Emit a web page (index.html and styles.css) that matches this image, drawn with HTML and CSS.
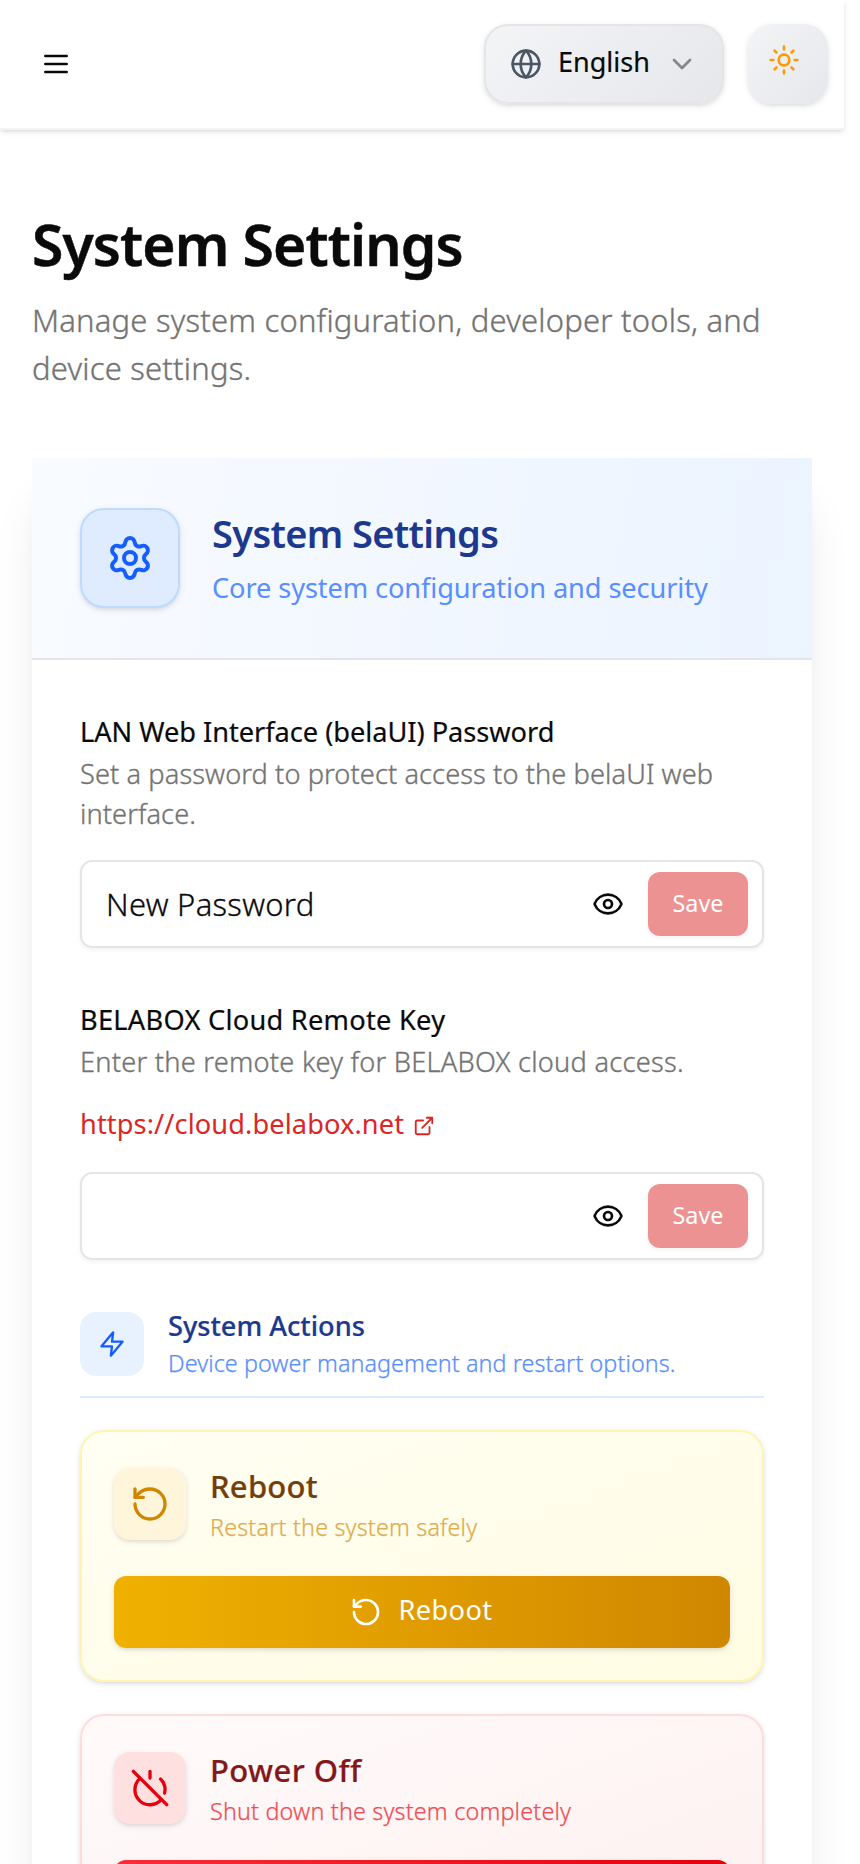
FILE: index.html
```
<!DOCTYPE html>
<html lang="en">
<head>
<meta charset="utf-8">
<title>System Settings</title>
<link rel="stylesheet" href="styles.css">
</head>
<body>
<header class="topbar">
  <button class="menu" aria-label="Menu"><svg class="icon i32" viewBox="0 0 24 24"><path d="M4 6h16M4 12h16M4 18h16"/></svg></button>
  <div class="tools">
    <button class="tool language">
      <svg class="icon i32 globe" viewBox="0 0 24 24"><circle cx="12" cy="12" r="10"/><path d="M12 2a14.5 14.5 0 0 0 0 20 14.5 14.5 0 0 0 0-20M2 12h20"/></svg>
      <span class="language-name">English</span>
      <svg class="icon i32 chevron" viewBox="0 0 24 24"><path d="m6 9 6 6 6-6"/></svg>
    </button>
    <button class="tool theme" aria-label="Theme"><svg class="icon i32 sun" viewBox="0 0 24 24"><circle cx="12" cy="12" r="4"/><path d="M12 2v2M12 20v2M4.93 4.93l1.41 1.41M17.66 17.66l1.41 1.41M2 12h2M20 12h2M6.34 17.66l-1.41 1.41M19.07 4.93l-1.41 1.41"/></svg></button>
  </div>
</header>
<main class="content">
  <h1 class="page-title">System Settings</h1>
  <p class="page-lead">Manage system configuration, developer tools, and<br>device settings.</p>
  <section class="card">
    <div class="card-head">
      <span class="card-icon"><svg class="icon i48" viewBox="0 0 24 24"><path d="M9.671 4.136a2.34 2.34 0 0 1 4.659 0 2.34 2.34 0 0 0 3.319 1.915 2.34 2.34 0 0 1 2.33 4.033 2.34 2.34 0 0 0 0 3.831 2.34 2.34 0 0 1-2.33 4.033 2.34 2.34 0 0 0-3.319 1.915 2.34 2.34 0 0 1-4.659 0 2.34 2.34 0 0 0-3.32-1.915 2.34 2.34 0 0 1-2.33-4.033 2.34 2.34 0 0 0 0-3.831A2.34 2.34 0 0 1 6.35 6.051a2.34 2.34 0 0 0 3.319-1.915"/><circle cx="12" cy="12" r="3"/></svg></span>
      <div>
        <h2 class="card-title">System Settings</h2>
        <p class="card-sub">Core system configuration and security</p>
      </div>
    </div>
    <div class="card-body">
      <div class="field">
        <label class="label lan">LAN Web Interface (belaUI) Password</label>
        <p class="hint">Set a password to protect access to the belaUI web<br>interface.</p>
        <div class="input">
          <span class="value">New Password</span>
          <svg class="icon i32" viewBox="0 0 24 24"><path d="M2.062 12.348a1 1 0 0 1 0-.696 10.75 10.75 0 0 1 19.876 0 1 1 0 0 1 0 .696 10.75 10.75 0 0 1-19.876 0"/><circle cx="12" cy="12" r="3"/></svg>
          <button class="save">Save</button>
        </div>
      </div>
      <div class="field">
        <label class="label key">BELABOX Cloud Remote Key</label>
        <p class="hint key-hint">Enter the remote key for BELABOX cloud access.</p>
        <a class="link">https://cloud.belabox.net<svg class="icon i22" viewBox="0 0 24 24"><path d="M15 3h6v6M10 14 21 3M18 13v6a2 2 0 0 1-2 2H5a2 2 0 0 1-2-2V8a2 2 0 0 1 2-2h6"/></svg></a>
        <div class="input">
          <span class="value"></span>
          <svg class="icon i32" viewBox="0 0 24 24"><path d="M2.062 12.348a1 1 0 0 1 0-.696 10.75 10.75 0 0 1 19.876 0 1 1 0 0 1 0 .696 10.75 10.75 0 0 1-19.876 0"/><circle cx="12" cy="12" r="3"/></svg>
          <button class="save">Save</button>
        </div>
      </div>
      <div class="group-head">
        <span class="group-icon"><svg class="icon i28" viewBox="0 0 24 24"><path d="M13 2 3 14h9l-1 8 10-12h-9l1-8z"/></svg></span>
        <div>
          <h3 class="group-title">System Actions</h3>
          <p class="group-sub">Device power management and restart options.</p>
        </div>
      </div>
      <div class="actions">
        <section class="action yellow">
          <div class="action-head">
            <span class="action-icon"><svg class="icon i40" viewBox="0 0 24 24"><path d="M3 12a9 9 0 1 0 9-9 9.75 9.75 0 0 0-6.74 2.74L3 8"/><path d="M3 3v5h5"/></svg></span>
            <div>
              <h4 class="action-title">Reboot</h4>
              <p class="action-sub">Restart the system safely</p>
            </div>
          </div>
          <button class="action-button"><svg class="icon i32" viewBox="0 0 24 24"><path d="M3 12a9 9 0 1 0 9-9 9.75 9.75 0 0 0-6.74 2.74L3 8"/><path d="M3 3v5h5"/></svg><span>Reboot</span></button>
        </section>
        <section class="action red">
          <div class="action-head">
            <span class="action-icon"><svg class="icon i40" viewBox="0 0 24 24"><path d="M18.36 6.64A9 9 0 0 1 20.77 15M6.16 6.16a9 9 0 1 0 12.68 12.68M12 2v4M2 2l20 20"/></svg></span>
            <div>
              <h4 class="action-title off">Power Off</h4>
              <p class="action-sub">Shut down the system completely</p>
            </div>
          </div>
          <button class="action-button" aria-label="Power Off"></button>
        </section>
      </div>
    </div>
  </section>
</main>
</body>
</html>
```
FILE: styles.css
```
* { box-sizing: border-box; }
html { overflow: hidden; }
body {
  margin: 0;
  height: 1864px;
  overflow: hidden;
  background: #fff;
  color: #0a0a0a;
  font-family: "Noto Sans", "Open Sans", sans-serif;
}
h1, h2, h3, h4, p { margin: 0; }
button { margin: 0; padding: 0; border: 0; background: none; color: inherit; font: inherit; }
.icon { display: block; flex: none; fill: none; stroke: currentColor; stroke-width: 2; stroke-linecap: round; stroke-linejoin: round; }
.i22 { width: 22px; height: 22px; }
.i28 { width: 28px; height: 28px; }
.i32 { width: 32px; height: 32px; }
.i40 { width: 40px; height: 40px; }
.i48 { width: 48px; height: 48px; }

.topbar {
  display: flex;
  align-items: center;
  justify-content: space-between;
  width: 844px;
  height: 130px;
  padding: 0 16px 0 40px;
  border-bottom: 2px solid #f3f3f3;
  box-shadow: 0 2px 6px rgba(0, 0, 0, .1), 0 2px 4px -2px rgba(0, 0, 0, .1);
}
.tools { display: flex; gap: 24px; }
.tool {
  display: flex;
  height: 80px;
  border-radius: 24px;
  background: linear-gradient(135deg, #f3f4f6, #e5e7eb);
  box-shadow: 0 2px 6px rgba(0, 0, 0, .1), 0 2px 4px -2px rgba(0, 0, 0, .1);
}
.language { width: 240px; align-items: center; padding: 0 24px; border: 2px solid #e5e5e5; }
.language-name { flex: 1; padding: 0 0 4px 16px; text-align: left; font-size: 27px; line-height: 36px; -webkit-text-stroke: .2px; }
.globe { color: #4a5565; }
.chevron { color: #858687; }
.theme { width: 80px; justify-content: center; padding: 20px 8px 0 0; }
.sun { color: #fe9a00; }

.content { width: 844px; height: 1734px; padding: 78px 32px 0; }
.page-title { font-size: 57px; font-weight: 600; line-height: 72px; letter-spacing: -.88px; -webkit-text-stroke: .5px; }
.page-lead { margin-top: 16px; color: #737373; font-size: 31px; font-weight: 300; line-height: 48px; letter-spacing: .21px; -webkit-text-stroke: .35px; }

.card {
  margin-top: 66px;
  border-radius: 24px;
  background: #fff;
  box-shadow: 0 40px 50px -10px rgba(0, 0, 0, .1), 0 16px 20px -12px rgba(0, 0, 0, .1);
}
.card-head {
  display: flex;
  align-items: center;
  gap: 32px;
  height: 202px;
  padding: 0 48px;
  border-bottom: 2px solid #e5e5e5;
  background: linear-gradient(100deg, #f8fbff, #ecf4ff);
}
.card-icon {
  display: grid;
  place-items: center;
  width: 100px;
  height: 100px;
  border: 2px solid #bedbff;
  border-radius: 24px;
  background: #dfecff;
  color: #155dfc;
  box-shadow: 0 2px 6px rgba(0, 0, 0, .1), 0 2px 4px -2px rgba(0, 0, 0, .1);
}
.card-title { color: #1c398e; font-size: 38px; font-weight: 600; line-height: 59px; letter-spacing: -.65px; }
.card-sub { color: #598eff; font-size: 27.2px; font-weight: 400; line-height: 50px; letter-spacing: -.1px; }
.card-body { padding: 52px 48px 48px; }
.field { margin-bottom: 52px; }
.label { display: block; font-size: 27.2px; font-weight: 400; line-height: 40px; -webkit-text-stroke: .2px; }
.lan { letter-spacing: -.03px; }
.key { letter-spacing: .27px; }
.hint { margin-top: 2px; color: #737373; font-size: 27.2px; font-weight: 300; line-height: 40px; letter-spacing: .09px; -webkit-text-stroke: .35px; }
.key-hint { letter-spacing: .25px; }
.link { display: flex; align-items: center; gap: 9px; margin-top: 22px; color: #dc2626; font-size: 27.2px; line-height: 40px; letter-spacing: .1px; }
.link .icon { margin-top: 4px; }
.input {
  display: flex;
  align-items: center;
  height: 88px;
  margin-top: 26px;
  padding: 0 14px 0 24px;
  border: 2px solid #e5e5e5;
  border-radius: 12px;
  box-shadow: 0 2px 4px rgba(0, 0, 0, .05);
}
.link + .input { margin-top: 28px; }
.value { flex: 1; font-size: 31px; font-weight: 300; letter-spacing: .28px; -webkit-text-stroke: .3px; }
.save {
  width: 100px;
  height: 64px;
  margin-left: 24px;
  padding-bottom: 2px;
  border-radius: 12px;
  background: #ed9292;
  color: #fff;
  font-size: 23.3px;
  box-shadow: 0 2px 4px rgba(0, 0, 0, .05);
}

.group-head {
  display: flex;
  align-items: center;
  gap: 24px;
  height: 91px;
  margin-top: -5px;
  padding-bottom: 15px;
  border-bottom: 2px solid #dbeafe;
}
.group-icon { display: grid; place-items: center; width: 64px; height: 64px; border-radius: 16px; background: #e8f2ff; color: #155dfc; }
.group-title { color: #1c398e; font-size: 27.2px; font-weight: 500; line-height: 37px; letter-spacing: -.02px; -webkit-text-stroke: .2px; }
.group-sub { color: #598eff; font-size: 23.3px; font-weight: 300; line-height: 38px; letter-spacing: .09px; -webkit-text-stroke: .25px; }

.actions { display: grid; gap: 32px; margin-top: 32px; }
.action { padding: 32px; border: 2px solid; border-radius: 24px; box-shadow: 0 2px 6px rgba(0, 0, 0, .1), 0 2px 4px -2px rgba(0, 0, 0, .1); }
.yellow { border-color: #fff4b3; background: linear-gradient(160deg, #fffff3, #fffce3); }
.red { border-color: #ffdcdc; background: linear-gradient(160deg, #fffafa, #fef0f0); }
.action-head { display: flex; align-items: center; gap: 24px; height: 80px; }
.action-icon { display: grid; place-items: center; width: 72px; height: 72px; border-radius: 16px; box-shadow: 0 2px 6px rgba(0, 0, 0, .1), 0 2px 4px -2px rgba(0, 0, 0, .1); }
.yellow .action-icon { background: #fef5da; color: #d08700; }
.red .action-icon { background: #ffe0e1; color: #e7000b; }
.action-title { font-size: 31px; font-weight: 500; line-height: 46px; letter-spacing: .25px; -webkit-text-stroke: .2px; }
.off { letter-spacing: .42px; }
.action-sub { font-size: 23.3px; font-weight: 300; line-height: 36px; letter-spacing: .2px; -webkit-text-stroke: .25px; }
.yellow .action-title { color: #733e0a; }
.yellow .action-sub { color: #e0ac4d; }
.red .action-title { color: #82181a; }
.red .action-sub { color: #ef4d55; }
.action-button {
  display: flex;
  align-items: center;
  justify-content: center;
  gap: 16px;
  width: 100%;
  height: 72px;
  margin-top: 32px;
  border-radius: 12px;
  color: #fff;
  font-size: 27.2px;
  letter-spacing: .4px;
  box-shadow: 0 2px 6px rgba(0, 0, 0, .1), 0 2px 4px -2px rgba(0, 0, 0, .1);
}
.action-button span { padding: 0 1px 6px 0; }
.yellow .action-button { background: linear-gradient(90deg, #f0b100, #d08700); }
.red .action-button { background: linear-gradient(90deg, #fb2c36, #e7000b); }
```
